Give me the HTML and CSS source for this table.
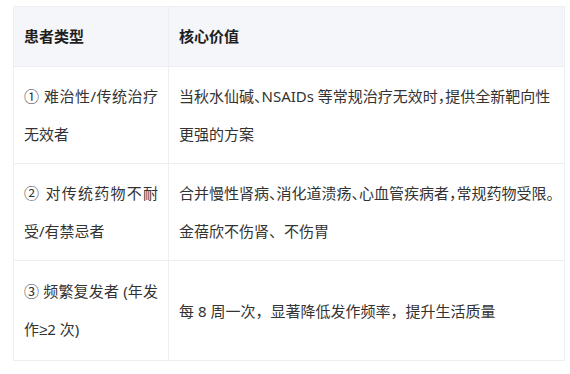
FILE: index.html
```html
<!DOCTYPE html>
<html lang="zh-CN">
<head>
<meta charset="utf-8">
<link rel="stylesheet" href="styles.css">
</head>
<body>
<table class="tbl">
  <thead>
    <tr>
      <th class="c1">患者类型</th>
      <th class="c2">核心价值</th>
    </tr>
  </thead>
  <tbody>
    <tr>
      <td class="type">① 难治性/传统治疗无效者</td>
      <td><span class="fit">当秋水仙碱、NSAIDs 等常规治疗无效时，提供全新靶向性</span>更强的方案</td>
    </tr>
    <tr>
      <td class="type">② 对传统药物不耐受/有禁忌者</td>
      <td><span class="fit">合并慢性肾病、消化道溃疡、心血管疾病者，常规药物受限。</span><br>金蓓欣不伤肾、不伤胃</td>
    </tr>
    <tr class="last">
      <td class="type">③ 频繁复发者 (年发作<span class="sym">≥</span>2 次)</td>
      <td>每 8 周一次，显著降低发作频率，提升生活质量</td>
    </tr>
  </tbody>
</table>
</body>
</html>
```

FILE: styles.css
```css
html, body {
  margin: 0;
  padding: 0;
  background: #ffffff;
}
body {
  padding: 6px 5px 0 13px;
  font-family: "Noto Sans", "Noto Sans CJK SC", sans-serif;
  font-size: 15px;
  color: #333333;
}
.tbl {
  border-collapse: collapse;
  width: 552px;
  table-layout: fixed;
}
.tbl th,
.tbl td {
  border: 1px solid #eceef1;
  padding: 10px 8px 10px 10px;
  line-height: 38px;
  text-align: left;
  vertical-align: middle;
  word-break: break-all;
}
.tbl th {
  background: #f5f6fa;
  font-weight: 700;
  color: #1f1f1f;
  padding-bottom: 11px;
}
.tbl th.c1 {
  width: 134px;
  padding-right: 10px;
}
.tbl td.type {
  padding-right: 10px;
  text-align: justify;
}
.tbl tr.last td {
  padding-top: 11px;
  padding-bottom: 11px;
}
.fit {
  font-feature-settings: "halt";
}
.sym {
  font-family: "Liberation Sans", sans-serif;
}
```
